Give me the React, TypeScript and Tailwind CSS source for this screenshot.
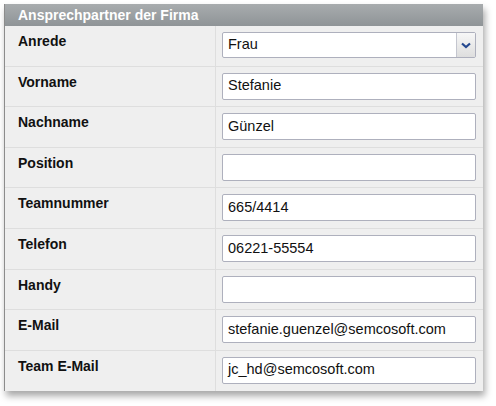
import React from "react"

const rows: { label: string; value: string }[] = [
  { label: "Vorname", value: "Stefanie" },
  { label: "Nachname", value: "Günzel" },
  { label: "Position", value: "" },
  { label: "Teamnummer", value: "665/4414" },
  { label: "Telefon", value: "06221-55554" },
  { label: "Handy", value: "" },
  { label: "E-Mail", value: "stefanie.guenzel@semcosoft.com" },
  { label: "Team E-Mail", value: "jc_hd@semcosoft.com" },
]

const Row: React.FC<{ label: string; children: React.ReactNode }> = ({ label, children }) => (
  <div className="grid grid-cols-[211px_1fr] h-[40.6px] border-b border-[#dedede] last:border-b-0">
    <div className="pl-[13px] pt-[5px] text-[14px] font-bold text-[#111] border-r border-[#dedede]">{label}</div>
    <div className="pl-[6px] pr-[7px] pt-[6px]">{children}</div>
  </div>
)

export default function App() {
  return (
    <div className="w-[496px] h-[406px] bg-white pt-1 pl-1 font-['Liberation_Sans',Arial,sans-serif]">
      <div className="w-[479px] bg-[#efefef] border-l border-[#8c8c8c] shadow-[2px_5px_7px_rgba(0,0,0,0.35)]">
        <div className="h-[22px] bg-gradient-to-b from-[#a8acae] to-[#8f9497] pl-[13px] flex items-center text-[14px] font-bold text-white">
          Ansprechpartner der Firma
        </div>
        <Row label="Anrede">
          <div className="h-[26px] flex border border-[#aeb0bd] rounded-[2px] bg-white">
            <div className="flex-1 pl-[5px] flex items-center text-[14.5px] text-[#111]">Frau</div>
            <div className="w-[19px] flex items-center justify-center border-l border-[#c4c6cf] bg-gradient-to-b from-[#f7f7f7] to-[#dedede]">
              <svg width="10" height="7" viewBox="0 0 10 7">
                <path d="M1 1.5 L5 5 L9 1.5" fill="none" stroke="#24488f" strokeWidth="2.2" />
              </svg>
            </div>
          </div>
        </Row>
        {rows.map((r) => (
          <Row key={r.label} label={r.label}>
            <div className="h-[27px] flex items-center pl-[5px] border border-[#aeb0bd] rounded-[2px] bg-white text-[14.5px] text-[#111]">
              {r.value}
            </div>
          </Row>
        ))}
      </div>
    </div>
  )
}
